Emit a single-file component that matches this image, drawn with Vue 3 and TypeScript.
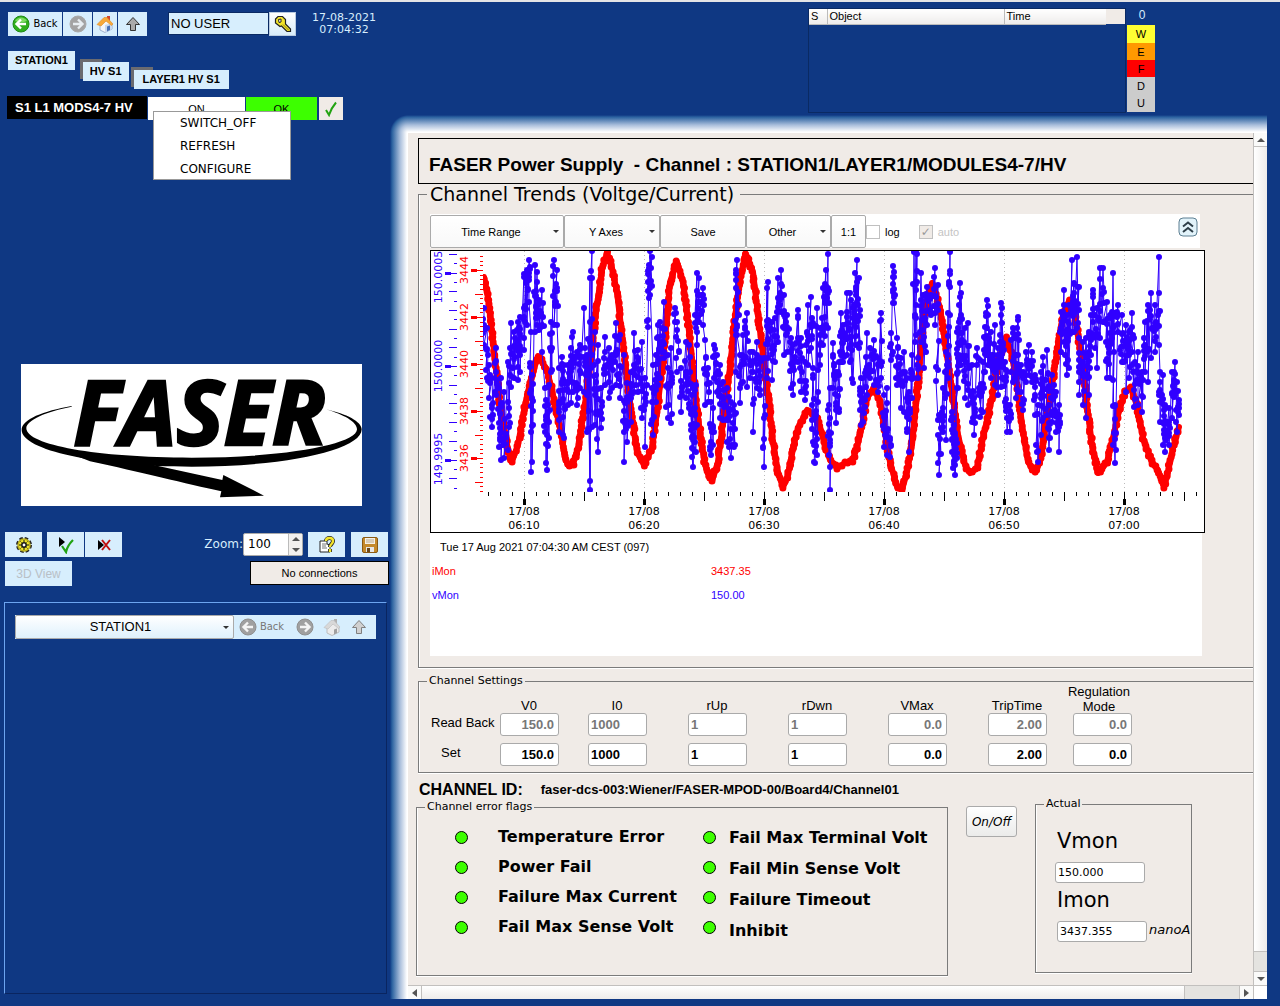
<script setup lang="ts">
import { ref } from 'vue'

const crumbs = ['STATION1', 'HV S1', 'LAYER1 HV S1']
const commands = ['SWITCH_OFF', 'REFRESH', 'CONFIGURE']
const alarmLevels = [
  { key: 'W', tone: 'warning' },
  { key: 'E', tone: 'error' },
  { key: 'F', tone: 'fatal' },
  { key: 'D', tone: 'idle' },
  { key: 'U', tone: 'idle' },
]
const settings = [
  { name: 'V0', read: '150.0', set: '150.0', numeric: true },
  { name: 'I0', read: '1000', set: '1000', numeric: false },
  { name: 'rUp', read: '1', set: '1', numeric: false },
  { name: 'rDwn', read: '1', set: '1', numeric: false },
  { name: 'VMax', read: '0.0', set: '0.0', numeric: true },
  { name: 'TripTime', read: '2.00', set: '2.00', numeric: true },
  { name: 'Regulation Mode', read: '0.0', set: '0.0', numeric: true },
]
const setValues = ref(settings.map((s) => s.set))
const flagsLeft = ['Temperature Error', 'Power Fail', 'Failure Max Current', 'Fail Max Sense Volt']
const flagsRight = ['Fail Max Terminal Volt', 'Fail Min Sense Volt', 'Failure Timeout', 'Inhibit']
const zoomLevel = ref(100)
const userName = ref('NO USER')
const station = ref('STATION1')

type Point = [number, number]

// Current trend: turning points of the curve, x then y.
const currentKeys: Point[] = [
  [484, 277], [488, 298], [493, 342], [500, 405], [507, 445], [512, 461], [518, 445], [525, 405], [532, 375], [538, 356],
  [547, 370], [553, 395], [562, 438], [565, 458], [568, 465], [573, 464], [578, 448], [585, 405], [592, 345], [597, 305],
  [602, 270], [607, 253], [612, 268], [617, 292], [622, 335], [627, 378], [632, 418], [637, 452], [644, 465], [652, 448],
  [657, 412], [662, 368], [667, 318], [670, 282], [677, 262], [683, 282], [688, 322], [693, 370], [698, 418], [705, 465],
  [712, 481], [718, 462], [723, 422], [730, 368], [735, 318], [740, 278], [746, 254], [753, 272], [758, 315], [763, 355],
  [768, 395], [773, 442], [778, 472], [783, 487], [788, 475], [793, 448], [798, 428], [807, 410], [817, 418], [823, 438],
  [830, 460], [837, 468], [845, 463], [852, 461], [857, 448], [862, 425], [867, 398], [873, 389], [880, 400], [885, 432],
  [890, 462], [897, 487], [902, 490], [907, 472], [912, 445], [917, 395], [921, 348], [925, 312], [932, 283], [940, 308],
  [945, 342], [952, 390], [958, 435], [965, 465], [970, 473], [977, 468], [983, 438], [992, 398], [998, 362], [1006, 338],
  [1012, 355], [1018, 392], [1023, 432], [1028, 462], [1035, 472], [1040, 462], [1045, 428], [1052, 385], [1058, 345],
  [1063, 315], [1069, 301], [1075, 315], [1080, 348], [1087, 405], [1092, 445], [1098, 473], [1107, 462], [1113, 438],
  [1118, 415], [1125, 392], [1131, 388], [1137, 405], [1143, 438], [1152, 463], [1158, 470], [1164, 487], [1168, 472],
  [1173, 448], [1179, 427],
]

// Voltage trend: bursts as x, highest, lowest, in thirds of a plot unit from each origin.
const voltageBursts: { x0: number; y0: number; rows: string }[] = [
  {
    x0: 425,
    y0: 245,
    rows:
      '178 190 300,186 250 400,192 360 460,200 400 545,213 310 450,222 430 605,228 400 645,238 440 640,250 350 615,257 235 425,268 260 400,278 230 405,285 215 380,297 88 315,305 75 240,313 45 170,318 260 680,322 390 650,330 60 260,335 80 240,343 165 255,352 135 320,360 430 560,366 480 675,372 420 580,378 230 380,388 45 240,395 75 240,402 370 560,412 335 470,418 360 580,428 360 480,437 310 475,445 260 440,455 320 480,465 300 430,478 190 440,487 330 560,494 100 735,500 18 545,510 260 540,518 300 620,528 430 550,540 275 420,553 310 460,562 330 430,573 235 420,585 270 460,597 330 650,607 415 590,618 380 530,628 265 440,638 315 440,650 290 520,661 400 605,668 225 245,672 60 160,676 18 130,683 360 570,692 330 470,700 240 420,706 230 400,716 170 340,728 330 520,738 310 535,751 190 230,757 230 380,768 370 500,783 290 460,793 300 490,803 430 665',
  },
  {
    x0: 690,
    y0: 245,
    rows:
      '5 450 610,10 500 665,17 420 620,20 85 300,28 100 230,38 130 240,45 285 480,55 370 470,62 470 630,68 490 600,73 300 400,82 330 440,90 360 520,100 410 525,112 430 590,122 470 640,133 480 605,137 75 380,142 45 270,150 330 475,158 270 410,170 205 425,180 320 400,190 320 560,200 290 430,210 340 450,222 340 665,230 130 400,235 110 340,245 230 405,255 220 350,265 100 290,273 75 200,282 150 330,292 210 320,302 280 430,310 300 450,323 195 350,333 280 440,344 350 465,353 180 360,364 155 310,368 370 590,376 520 655,382 190 630,390 250 360,400 130 300,407 75 240,413 28 250,416 480 630,421 430 735,430 295 430,437 380 535,447 350 500,452 205 350,460 240 350,470 145 330,480 145 350,488 190 415,497 150 300,500 45 170,507 100 310,512 400 540,520 400 530,530 265 450,540 310 400,553 285 420,565 340 440,574 205 400,583 450 605,592 430 630,600 580 635,604 265 345,608 62 175,613 95 175,622 280 420,632 340 490,643 320 500,652 400 560,658 440 620,665 330 460,673 20 400,678 20 180,684 340 400,694 85 290,703 150 370,712 125 240,722 150 210,735 70 240,743 120 525,748 510 690,758 430 560,768 320 585,774 205 400,779 20 210,787 500 620,796 570 690,803 250 430',
  },
  {
    x0: 950,
    y0: 205,
    rows:
      '10 640 790,16 690 810,22 380 550,30 235 420,34 265 480,45 370 580,55 355 600,65 480 650,73 580 690,80 430 480,90 465 635,98 470 620,104 365 500,110 285 370,115 330 480,123 380 520,135 360 540,145 430 570,153 295 545,157 310 520,165 470 590,172 500 680,180 600 680,188 370 530,198 400 580,204 335 560,213 480 560,220 500 615,228 440 530,236 420 510,245 440 530,255 510 630,263 600 770,272 500 690,280 455 640,292 435 630,298 600 735,307 510 650,317 560 680,328 600 740,333 320 440,341 255 410,350 330 510,357 300 490,367 165 380,373 265 380,382 155 370,388 400 570,398 410 600,409 400 640,416 380 570,422 330 450,430 255 400,440 310 490,451 190 400,460 190 350,470 290 520,480 330 520,487 320 400,490 205 720,495 600 775,505 300 380,515 330 470,527 360 560,537 380 520,545 325 440,553 400 605,563 440 600,575 500 620,585 350 500,593 300 530,603 265 460,615 300 440,626 155 420,630 500 650,638 510 720,645 600 740,658 610 720,667 500 640,674 470 570,681 530 680,686 585 630',
  },
]

let seed = 7
function random(): number {
  seed = (seed * 16807) % 2147483647
  return seed / 2147483647
}

function sampleCurrent(): Point[] {
  const out: Point[] = []
  for (let i = 0; i < currentKeys.length - 1; i++) {
    const [ax, ay] = currentKeys[i]
    const [bx, by] = currentKeys[i + 1]
    const steps = Math.max(3, Math.round(Math.hypot(bx - ax, by - ay) / 3))
    for (let s = 0; s < steps; s++) {
      const t = s / steps
      out.push([ax + (bx - ax) * t + (random() - 0.5) * 2, Math.round(ay + (by - ay) * t + (random() - 0.5) * 3)])
    }
  }
  return out
}

function sampleVoltage(): Point[] {
  const out: Point[] = []
  for (const { x0, y0, rows } of voltageBursts) {
    for (const row of rows.split(',')) {
      const [cx, hi, lo] = row.split(' ').map(Number)
      const x = x0 + cx / 3
      const top = y0 + hi / 3
      const bottom = y0 + lo / 3
      const count = Math.max(1, Math.min(6, Math.round((bottom - top) / 7)))
      out.push([x, top])
      for (let i = 0; i < count; i++) {
        // Averaging two draws gathers the readings around the middle of a burst.
        const t = (random() + random()) / 2
        out.push([x + (random() - 0.5) * 3, top + (bottom - top) * t])
      }
      out.push([x, bottom])
    }
  }
  return out.map(([x, y]) => [Math.round(x), Math.round(y)] as Point)
}

const toLine = (points: Point[]) => 'M' + points.map(([x, y]) => `${x.toFixed(1)} ${y}`).join('L')
const toDots = (points: Point[]) => points.map(([x, y]) => `M${x.toFixed(1)} ${y}h0`).join('')

const current = sampleCurrent()
const voltage = sampleVoltage()
const currentLine = toLine(currentKeys)
const currentDots = toDots(current)
const voltageLine = toLine(voltage)
const voltageDots = toDots(voltage)

const timeLabels = ['06:10', '06:20', '06:30', '06:40', '06:50', '07:00'].map((time, i) => ({ time, x: 524 + i * 120 }))
const timeTicks = Array.from({ length: 60 }, (_, i) => {
  const x = 488 + i * 12
  return { x, end: (x - 524) % 120 === 0 ? 505 : (x - 524) % 60 === 0 ? 501 : 496 }
})
const voltLabels = [
  { text: '150.0005', y: 277 },
  { text: '150.0000', y: 366 },
  { text: '149.9995', y: 459 },
]
const voltTicks = Array.from({ length: 26 }, (_, i) => {
  const step = i - 2
  return { y: Math.round(272.5 + step * 9.35), start: step % 10 === 0 ? 446 : step % 2 === 0 ? 449 : 454, major: step % 10 === 0 }
})
const ampLabels = [3444, 3442, 3440, 3438, 3436].map((text, i) => ({ text, y: 270 + i * 47 }))
const ampTicks = Array.from({ length: 51 }, (_, i) => {
  const step = i - 3
  return { y: Math.round(270 + step * 4.7), start: step % 10 === 0 ? 471 : step % 5 === 0 ? 475 : 480, major: step % 10 === 0 }
})
</script>

<template>
  <div class="console">
    <aside class="side">
      <div class="topbar">
        <nav class="nav" aria-label="History">
          <button type="button" class="tool back">
            <svg width="18" height="18" viewBox="0 0 18 18">
              <circle cx="9" cy="9" r="8" fill="#2fae1d" stroke="#1d8b14" />
              <path d="M3 6a7 7 0 0 1 12 0a12 9 0 0 1-12 0z" fill="#7ddc62" />
              <path d="M14 9H5M9 4.500L4.500 9L9 13.500" fill="none" stroke="#fff" stroke-width="2.400" />
            </svg>
            Back
          </button>
          <button type="button" class="tool forward" aria-label="Forward">
            <svg width="18" height="18" viewBox="0 0 18 18">
              <circle cx="9" cy="9" r="8" fill="#a3a3a3" stroke="#a9a9a9" />
              <path d="M4 9H13M9 4.500L13.500 9L9 13.500" fill="none" stroke="#e8eef2" stroke-width="2.400" />
            </svg>
          </button>
          <button type="button" class="tool home" aria-label="Home">
            <svg width="18" height="18" viewBox="0 0 18 18">
              <path d="M4 9L11 5L16 9V14L9 17.500L4 15z" fill="#f4f6fa" stroke="#9fb0cc" />
              <path d="M9 10L16 8V14L9 17.500z" fill="#c9d8ee" />
              <path d="M11 1h3v5h-3z" fill="#d2452e" />
              <path d="M1 9.500L8 2.500L11 2.500L17 9L15.500 10.500L10 6L5 11z" fill="#f7a93a" stroke="#e08a24" stroke-width=".6" />
              <path d="M11 11.500l3-1v4.500l-3 1.500z" fill="#4a72b8" />
            </svg>
          </button>
          <button type="button" class="tool up" aria-label="Up">
            <svg width="16" height="16" viewBox="0 0 16 16">
              <path d="M8 1.500L14.500 8.500H10.500V14.500H5.500V8.500H1.500z" fill="#a9a9a9" stroke="#333" />
            </svg>
          </button>
        </nav>
        <div class="user">
          <input v-model="userName" aria-label="User" />
          <button type="button" aria-label="Log in">
            <svg width="18" height="18" viewBox="0 0 18 18">
              <path d="M4 1.500H8.500L11.500 4.500V9L16.500 14V16.500H13L7.500 11L6 11.500L1.500 8V4z" fill="#f2e32a" stroke="#222" stroke-width="1.200" />
              <path d="M4.500 4.500L7 4V7L5 7.500z" fill="#fff" stroke="#222" />
              <path d="M9 9.500L15 15.500" stroke="#8a8010" />
            </svg>
          </button>
        </div>
        <time class="clock">17-08-2021<br />07:04:32</time>
      </div>

      <nav class="crumbs" aria-label="Position">
        <a v-for="crumb in crumbs" :key="crumb" href="#">{{ crumb }}</a>
      </nav>

      <div class="unit">
        <strong>S1 L1 MODS4-7 HV</strong>
        <button type="button" class="state">ON</button>
        <button type="button" class="status">OK</button>
        <button type="button" class="ack" aria-label="Enabled">
          <svg width="14" height="16" viewBox="0 0 14 16">
            <path d="M2 9L5 14C7 8 9 5 12 1.500" fill="none" stroke="#22a312" stroke-width="2" />
          </svg>
        </button>
        <ul class="menu" role="menu">
          <li v-for="command in commands" :key="command" role="none">
            <button type="button" role="menuitem">{{ command }}</button>
          </li>
        </ul>
      </div>

      <div class="logo">
        <svg viewBox="63 42 1023 426" role="img" aria-label="FASER">
          <text x="220" y="284">FASER</text>
          <path
            d="M215 168C130 183 65 208 65 240C65 300 290 350 575 350C860 350 1085 300 1085 238C1085 215 1040 192 978 178C1030 194 1071 215 1071 238C1071 282 860 323 575 323C290 323 79 285 79 235C79 210 140 184 215 170z"
          />
          <path d="M230 318L430 338L667 390L670 375L792 437L660 442L664 424C560 402 420 366 270 334z" />
        </svg>
      </div>

      <div class="tools">
        <button type="button" class="tool icon" aria-label="Settings">
          <svg width="18" height="18" viewBox="0 0 18 18">
            <circle cx="9" cy="9" r="6" fill="#e8dd2a" stroke="#222" stroke-width="4" stroke-dasharray="3 1.700" />
            <circle cx="9" cy="9" r="6" fill="#f0e62c" stroke="#b9ae1c" stroke-width="1.500" />
            <circle cx="9" cy="9" r="2.200" fill="#fff" stroke="#111" stroke-width="1.500" />
            <path d="M4 9h2M12 9h2M9 4v2M9 12v2M5.500 5.500l1 1M11.500 11.500l1 1M12.500 5.500l-1 1M6.500 11.500l-1 1" stroke="#111" />
          </svg>
        </button>
        <button type="button" class="tool icon" aria-label="Include">
          <svg width="18" height="18" viewBox="0 0 18 18">
            <path d="M2 1L8 6L2 11z" />
            <path d="M5 10L9 16C10 11 12 8 16 4" fill="none" stroke="#22a312" stroke-width="2.200" />
          </svg>
        </button>
        <button type="button" class="tool icon" aria-label="Exclude">
          <svg width="18" height="18" viewBox="0 0 18 18">
            <path d="M3 4L9 9L3 14z" />
            <path d="M7 4L15 14M15 4L7 14" stroke="#c01010" stroke-width="2" />
          </svg>
        </button>
        <label class="zoom" for="zoom">Zoom:</label>
        <div class="spin">
          <input id="zoom" v-model="zoomLevel" type="number" />
          <div class="steps">
            <button type="button" aria-label="Zoom in" @click="zoomLevel++"><i class="tri up"></i></button>
            <button type="button" aria-label="Zoom out" @click="zoomLevel--"><i class="tri down"></i></button>
          </div>
        </div>
        <button type="button" class="tool icon" aria-label="Help">
          <svg width="18" height="18" viewBox="0 0 18 18">
            <path d="M2 5H9V8L12 9V16H2z" fill="#fff" stroke="#222" />
            <path d="M4 8h5M4 10h4M4 12h5" stroke="#777" />
            <path d="M8 5C8 1 15 1 15 5C15 8 12 8 12 11M12 13v3" fill="none" stroke="#222" stroke-width="4" />
            <path d="M8 5C8 1 15 1 15 5C15 8 12 8 12 11M12 13v3" fill="none" stroke="#f4e52c" stroke-width="2.400" />
          </svg>
        </button>
        <button type="button" class="tool icon" aria-label="Save">
          <svg width="18" height="18" viewBox="0 0 18 18">
            <rect x="1.500" y="1.500" width="15" height="15" rx="1.500" fill="#c48a2c" stroke="#8a5a14" />
            <path d="M4 2h10v6H4z" fill="#f6f1e6" />
            <path d="M5 4h8M5 6h8" stroke="#b9a98c" />
            <path d="M5 11h8v5H5z" fill="#e6e6e6" />
            <path d="M6 12h3v4H6z" fill="#6b4a1a" />
          </svg>
        </button>
      </div>
      <div class="tools second">
        <button type="button" class="tool view" disabled>3D View</button>
        <output class="links">No connections</output>
      </div>

      <section class="browser" aria-label="Browser">
        <div class="browserbar">
          <div class="combo">
            <select v-model="station" aria-label="Station">
              <option>STATION1</option>
            </select>
            <i class="tri down small"></i>
          </div>
          <button type="button" class="tool" disabled>
            <svg width="18" height="18" viewBox="0 0 18 18">
              <circle cx="9" cy="9" r="8" fill="#a0a0a0" stroke="#8f8f8f" />
              <path d="M14 9H5M9 4.500L4.500 9L9 13.500" fill="none" stroke="#f4f4f4" stroke-width="2.400" />
            </svg>
            Back
          </button>
          <button type="button" class="tool next" aria-label="Forward" disabled>
            <svg width="18" height="18" viewBox="0 0 18 18">
              <circle cx="9" cy="9" r="8" fill="#a0a0a0" stroke="#8f8f8f" />
              <path d="M4 9H13M9 4.500L13.500 9L9 13.500" fill="none" stroke="#f4f4f4" stroke-width="2.400" />
            </svg>
          </button>
          <button type="button" class="tool" aria-label="Home" disabled>
            <svg width="18" height="18" viewBox="0 0 18 18">
              <path d="M4 9L11 5L16 9V14L9 17.500L4 15z" fill="#ececec" stroke="#bdbdbd" />
              <path d="M11 1h3v5h-3z" fill="#b0b0b0" />
              <path d="M1 9.500L8 2.500L11 2.500L17 9L15.500 10.500L10 6L5 11z" fill="#d8d8d8" stroke="#bcbcbc" stroke-width=".6" />
              <path d="M11 11.500l3-1v4.500l-3 1.500z" fill="#a0a0a0" />
            </svg>
          </button>
          <button type="button" class="tool" aria-label="Up" disabled>
            <svg width="16" height="16" viewBox="0 0 16 16">
              <path d="M8 1.500L14.500 8.500H10.500V14.500H5.500V8.500H1.500z" fill="#d0d0d0" stroke="#808080" />
            </svg>
          </button>
        </div>
      </section>
    </aside>

    <main class="main">
      <header class="alarms">
        <div class="alarmlist">
          <table>
            <thead>
              <tr>
                <th class="severity">S</th>
                <th class="object">Object</th>
                <th class="when">Time</th>
                <td></td>
              </tr>
            </thead>
          </table>
        </div>
        <div class="levels">
          <span class="count">0</span>
          <button v-for="level in alarmLevels" :key="level.key" type="button" :class="level.tone">{{ level.key }}</button>
        </div>
      </header>

      <div class="frame">
        <div class="viewport">
          <h1>FASER Power Supply&nbsp; - Channel : STATION1/LAYER1/MODULES4-7/HV</h1>

          <fieldset class="trends">
            <legend>Channel Trends (Voltge/Current)</legend>
            <div class="trendbar">
              <button type="button" class="wide">Time Range<i class="tri down small"></i></button>
              <button type="button" class="axes">Y Axes<i class="tri down small"></i></button>
              <button type="button" class="save">Save</button>
              <button type="button" class="other">Other<i class="tri down small"></i></button>
              <button type="button" class="unitscale">1:1</button>
              <label><input type="checkbox" />log</label>
              <label class="off"><input type="checkbox" checked disabled />auto</label>
              <button type="button" class="collapse" aria-label="Collapse">
                <svg width="20" height="20" viewBox="0 0 20 20">
                  <rect x="1" y="1" width="18" height="18" rx="4" fill="#e2f3fa" stroke="#5c7f92" />
                  <path d="M5 9.500L10 5.500L15 9.500M5 15L10 11L15 15" fill="none" stroke="#2d3e48" stroke-width="2" />
                </svg>
              </button>
            </div>
            <svg class="chart" width="775" height="283" viewBox="430 250 775 283" role="img" aria-label="Voltage and current trend">
              <defs>
                <clipPath id="plot-area"><rect x="483" y="251" width="721" height="241" /></clipPath>
              </defs>
              <rect x="430.5" y="250.5" width="774" height="282" fill="#fff" stroke="#000" />
              <path v-for="label in timeLabels" :key="label.x" :d="`M${label.x + 0.5} 251V492`" class="gridline" />
              <g clip-path="url(#plot-area)">
                <path :d="currentLine" class="current-line" />
                <path :d="currentDots" class="current-dots" />
                <path :d="voltageLine" class="voltage-line" />
                <path :d="voltageDots" class="voltage-dots" />
              </g>
              <g class="crisp">
                <template v-for="tick in timeTicks" :key="tick.x">
                  <rect :x="tick.x" y="492" width="1" :height="tick.end - 492" />
                  <rect v-if="tick.end === 505" :x="tick.x - 1" y="499" width="3" height="6" />
                </template>
                <g fill="#3000ff">
                  <template v-for="tick in voltTicks" :key="tick.y">
                    <rect :x="tick.start" :y="tick.y" :width="457 - tick.start" height="1" />
                    <rect v-if="tick.major" x="445" :y="tick.y - 1" width="6" height="3" />
                  </template>
                </g>
                <g fill="#f00">
                  <template v-for="tick in ampTicks" :key="tick.y">
                    <rect :x="tick.start" :y="tick.y" :width="483 - tick.start" height="1" />
                    <rect v-if="tick.major" x="471" :y="tick.y - 1" width="6" height="3" />
                  </template>
                </g>
              </g>
              <text v-for="label in voltLabels" :key="label.text" :transform="`translate(442 ${label.y}) rotate(-90)`" fill="#3000ff">
                {{ label.text }}
              </text>
              <text v-for="label in ampLabels" :key="label.text" :transform="`translate(468 ${label.y}) rotate(-90)`" fill="#f00">
                {{ label.text }}
              </text>
              <template v-for="label in timeLabels" :key="label.time">
                <text :x="label.x" y="515">17/08</text>
                <text :x="label.x" y="529">{{ label.time }}</text>
              </template>
            </svg>
            <div class="readout">
              <p>Tue 17 Aug 2021 07:04:30 AM CEST (097)</p>
              <dl>
                <div class="imon"><dt>iMon</dt><dd>3437.35</dd></div>
                <div class="vmon"><dt>vMon</dt><dd>150.00</dd></div>
              </dl>
            </div>
          </fieldset>

          <fieldset class="settings">
            <legend>Channel Settings</legend>
            <div class="matrix">
              <span></span>
              <span v-for="s in settings" :key="s.name" class="colhead">{{ s.name }}</span>
              <span class="rowhead">Read Back</span>
              <input
                v-for="s in settings"
                :key="s.name + '-read'"
                :value="s.read"
                :class="{ numeric: s.numeric }"
                :aria-label="s.name + ' read back'"
                disabled
              />
              <span class="rowhead set">Set</span>
              <input
                v-for="(s, i) in settings"
                :key="s.name + '-set'"
                v-model="setValues[i]"
                :class="{ numeric: s.numeric }"
                :aria-label="s.name + ' set'"
              />
            </div>
          </fieldset>

          <p class="channel"><b>CHANNEL ID:</b><strong>faser-dcs-003:Wiener/FASER-MPOD-00/Board4/Channel01</strong></p>

          <div class="bottom">
            <fieldset class="flags">
              <legend>Channel error flags</legend>
              <ul class="leds"><li v-for="flag in flagsLeft" :key="flag"></li></ul>
              <ul class="names first"><li v-for="flag in flagsLeft" :key="flag">{{ flag }}</li></ul>
              <ul class="leds"><li v-for="flag in flagsRight" :key="flag"></li></ul>
              <ul class="names tall"><li v-for="flag in flagsRight" :key="flag">{{ flag }}</li></ul>
            </fieldset>
            <button type="button" class="onoff">On/Off</button>
            <fieldset class="actual">
              <legend>Actual</legend>
              <label for="vmon">Vmon</label>
              <input id="vmon" value="150.000" readonly />
              <label for="imon">Imon</label>
              <div class="withunit"><input id="imon" value="3437.355" readonly /><em>nanoA</em></div>
            </fieldset>
          </div>
        </div>

        <div class="scroll vertical">
          <button type="button" aria-label="Scroll up"><i class="tri up"></i></button>
          <div class="thumb"></div>
          <div class="track"></div>
          <button type="button" aria-label="Scroll down"><i class="tri down"></i></button>
        </div>
        <div class="scroll horizontal">
          <button type="button" aria-label="Scroll left"><i class="tri left"></i></button>
          <div class="thumb"></div>
          <div class="track"></div>
          <button type="button" aria-label="Scroll right"><i class="tri right"></i></button>
        </div>
        <div class="corner"></div>
      </div>
    </main>
  </div>
</template>

<style>
body {
  background: #0f3883;
}
</style>

<style scoped>
.console,
.console * {
  box-sizing: border-box;
}
.console {
  display: grid;
  grid-template-columns: 390px 1fr;
  min-height: 100vh;
  border-top: 2px solid #e4e4e6;
  background: #0f3883;
  color: #000;
  font: 11px/14px 'Liberation Sans', Arial, sans-serif;
}
button,
input,
select {
  margin: 0;
  padding: 0;
  border: 0;
  border-radius: 0;
  font: inherit;
  color: inherit;
}
ul,
dl,
dd,
p,
h1 {
  margin: 0;
  padding: 0;
  list-style: none;
}
svg {
  display: block;
  flex: none;
}
.tool {
  display: flex;
  align-items: center;
  justify-content: center;
  gap: 3px;
  background: #d7eefd;
  font-family: 'DejaVu Sans Condensed', 'DejaVu Sans', sans-serif;
}
.tri {
  display: block;
  width: 0;
  height: 0;
  border: 4px solid transparent;
}
.tri.up {
  border-top: 0;
  border-bottom-color: #555;
}
.tri.down {
  border-bottom: 0;
  border-top-color: #555;
}
.tri.left {
  border-left: 0;
  border-right: 5px solid #555;
}
.tri.right {
  border-right: 0;
  border-left: 5px solid #555;
}
.tri.small {
  border-width: 3px;
  border-bottom: 0;
  border-top-color: #333;
}

/* Left column */
.side {
  display: flex;
  flex-direction: column;
  padding: 10px 3px 12px 4px;
}
.topbar {
  display: flex;
  padding-left: 4px;
}
.nav {
  display: flex;
  gap: 1px;
  height: 24px;
}
.back {
  width: 54px;
}
.forward,
.up.tool {
  width: 29px;
}
.home {
  width: 24px;
}
.user {
  display: flex;
  height: 24px;
  margin-left: 21px;
}
.user input {
  width: 101px;
  height: 23px;
  padding: 0 2px 1px;
  border: 1px solid #0a2a63;
  background: #d7eefd;
  font-size: 13px;
  line-height: 16px;
}
.user button {
  display: flex;
  align-items: center;
  justify-content: center;
  width: 27px;
  border: 1px solid #b9cbe0;
  background: linear-gradient(#fff, #d8ecfa);
}
.clock {
  margin-left: 16px;
  color: #d7eefd;
  font: 11px/12px 'DejaVu Sans', sans-serif;
  text-align: center;
}
.crumbs {
  display: flex;
  align-items: flex-start;
  margin: 15px 0 0 4px;
  font-weight: bold;
}
.crumbs a {
  position: relative;
  padding: 0 7px;
  background: #d7eefd;
  color: #000;
  line-height: 19px;
  text-decoration: none;
}
.crumbs a + a {
  margin: 11px 0 0 8px;
}
.crumbs a + a + a {
  margin: 19px 0 0 5px;
  padding: 0 9px;
}
.crumbs a + a::before {
  content: '';
  position: absolute;
  left: -3px;
  top: -3px;
  width: 19px;
  height: 17px;
  border: solid #6b6b70;
  border-width: 3px 0 0 3px;
}
.unit {
  position: relative;
  display: flex;
  gap: 1px;
  height: 24px;
  margin: 7px 0 0 3px;
}
.unit strong {
  width: 140px;
  height: 23px;
  padding-left: 8px;
  background: #000;
  color: #fff;
  font-size: 13px;
  line-height: 23px;
}
.unit button {
  margin-top: 1px;
}
.state {
  width: 97px;
  background: #fff;
}
.status {
  width: 71px;
  background: #3dff00;
}
.ack {
  display: flex;
  align-items: center;
  justify-content: center;
  width: 24px;
  background: #f0ebe7;
}
.unit .ack {
  margin-left: 1px;
}
.menu {
  position: absolute;
  z-index: 1;
  top: 15px;
  left: 146px;
  width: 138px;
  border: 1px solid #999;
  background: #fff;
}
.menu button {
  display: block;
  width: 100%;
  height: 23px;
  margin: 0;
  padding: 0 0 2px 26px;
  background: none;
  font: 12px/20px 'DejaVu Sans', sans-serif;
  text-align: left;
}
.menu li:last-child button {
  height: 21px;
  padding-bottom: 0;
}
.logo {
  width: 341px;
  margin: 244px 0 0 17px;
  background: #fff;
}
.logo svg {
  overflow: visible;
}
.logo text {
  font: italic bold 267px 'Liberation Sans Narrow', 'Open Sans', sans-serif;
  stroke: #000;
  stroke-width: 8px;
}
.tools {
  display: flex;
  gap: 1px;
  height: 25px;
  margin: 26px -1px 0 1px;
}
.tool.icon {
  width: 37px;
}
.tools .icon:first-child {
  margin-right: 4px;
}
.zoom {
  margin: 0 -1px 0 auto;
  color: #d7eefd;
  font: 12px/24px 'DejaVu Sans', sans-serif;
}
.spin {
  display: flex;
  align-self: center;
  width: 60px;
  height: 23px;
  margin-right: 4px;
  border: 1px solid #aaa;
  border-radius: 2px;
  background: #fff;
}
.spin input {
  flex: 1;
  min-width: 0;
  padding-left: 4px;
  appearance: textfield;
  background: none;
  font: 12px/21px 'DejaVu Sans', sans-serif;
}
.spin input::-webkit-inner-spin-button {
  display: none;
}
.steps {
  display: grid;
  width: 14px;
  border-left: 1px solid #bbb;
  background: #f3f1ef;
}
.steps button {
  display: grid;
  place-items: center;
  background: none;
}
.tools .icon:last-child {
  margin-left: 5px;
}
.tools.second {
  justify-content: space-between;
  margin-top: 4px;
}
.tool.view {
  width: 67px;
  color: #b9c0c6;
  font: 12px 'Liberation Sans', Arial, sans-serif;
}
.links {
  width: 139px;
  height: 24px;
  margin-right: -1px;
  border: 1px solid #000;
  background: #f0ebe7;
  line-height: 22px;
  text-align: center;
}
.browser {
  flex: 1;
  margin-top: 16px;
  padding: 12px 10px;
  border: 1px solid;
  border-color: #6da5f0 #0a2560 #0a2560 #6da5f0;
}
.browserbar {
  display: flex;
  align-items: center;
  height: 24px;
  background: #d7eefd;
}
.browserbar .tool {
  height: 24px;
  padding: 0 5px;
  color: #777;
}
.browserbar .tool.next {
  padding: 0 4px 0 7px;
}
.combo {
  display: grid;
  align-items: center;
  width: 219px;
  height: 24px;
}
.combo > * {
  grid-area: 1 / 1;
}
.combo select {
  width: 100%;
  height: 24px;
  padding-right: 8px;
  appearance: none;
  border: 1px solid #aaa;
  border-radius: 2px;
  background: linear-gradient(#fff, #dff1fc);
  font-size: 13px;
  text-align: center;
  text-align-last: center;
}
.combo .tri {
  justify-self: end;
  margin-right: 5px;
}

/* Right column */
.main {
  display: flex;
  flex-direction: column;
  min-width: 0;
  padding: 6px 13px 7px 0;
}
.alarms {
  display: flex;
  justify-content: flex-end;
  gap: 1px;
  height: 107px;
  padding-right: 112px;
}
.alarmlist {
  width: 318px;
  height: 105px;
  border: 1px solid #0a2a63;
}
.alarmlist table {
  width: 100%;
  border-collapse: collapse;
  table-layout: fixed;
}
.alarmlist th,
.alarmlist td {
  height: 15px;
  padding: 0 2px;
  background: #f0ebe7;
}
.alarmlist th {
  border: solid #bbb;
  border-width: 0 1px 1px 0;
  background: linear-gradient(#fff, #eeeceb);
  font-weight: normal;
  text-align: left;
}
.alarmlist .when {
  border-right: 0;
}
.severity {
  width: 18px;
}
.object {
  width: 177px;
}
.when {
  width: 102px;
}
.levels {
  display: grid;
  grid-template-rows: 17px 18px 17px 17px 17px 18px;
  width: 28px;
  align-content: start;
  text-align: center;
}
.count {
  padding-left: 2px;
  color: #d7eefd;
  font-size: 12px;
}
.warning {
  background: #ff3;
}
.error {
  background: #f90;
}
.fatal {
  background: #f00;
}
.idle {
  background: #ccc;
}
.frame {
  display: grid;
  flex: 1;
  grid-template: 1fr 14px / minmax(0, 1fr) 14px;
  padding: 18px 0 0 18px;
  background:
    radial-gradient(circle at 18px 18px, #fff 0, #fff 1px, #a9bedb 8px, #2a619f 16px, #0f3883 18px) 0 0 / 18px 18px no-repeat,
    linear-gradient(#0f3883, #2a619f 2px, #a9bedb 10px, #fff 17px) 18px 0 / 100% 18px no-repeat,
    linear-gradient(to right, #0f3883, #2a619f 2px, #a9bedb 10px, #fff 17px) 0 18px / 18px 100% no-repeat;
}
.viewport {
  overflow: hidden;
  padding: 5px 0 7px 10px;
  background: #f0ebe7;
}
h1 {
  height: 46px;
  padding: 0 10px;
  border: solid #000;
  border-width: 1px 0 1px 1px;
  font-size: 19px;
  line-height: 51px;
  white-space: nowrap;
}
fieldset {
  min-width: 0;
  margin: 0;
  padding: 0;
  border: 1px solid #7b7b7b;
  box-shadow: inset 1px 0 #fff, 0 1px #fff;
}
legend {
  margin-left: 8px;
  padding: 0 2px;
  font: 11px/14px 'DejaVu Sans', sans-serif;
}
.trends,
.settings {
  border-right: 0;
}
.trends {
  padding: 10px 0 11px 11px;
}
.trends legend {
  margin-left: -3px;
  padding: 0 6px 0 3px;
  font-size: 19px;
  line-height: 20px;
}
.trendbar {
  display: flex;
  max-width: 770px;
  height: 34px;
  padding-top: 1px;
  background: #fff;
}
.trendbar > button {
  position: relative;
  border: 1px solid #aaa;
  border-radius: 2px;
  background: linear-gradient(#fff, #f8f8f8);
}
.trendbar .tri {
  position: absolute;
  top: 14px;
  right: 4px;
}
.trendbar .wide {
  width: 134px;
  padding-right: 12px;
}
.trendbar .axes {
  width: 96px;
  padding-right: 12px;
}
.trendbar .save {
  width: 86px;
}
.trendbar .other {
  width: 85px;
  padding-right: 12px;
}
.trendbar .unitscale {
  width: 35px;
}
.trendbar label {
  display: flex;
  align-items: center;
  gap: 5px;
  margin-right: 19px;
}
.trendbar .off {
  color: #c4c4c4;
}
.trendbar input {
  width: 14px;
  height: 14px;
  appearance: none;
  border: 1px solid #c0c0c0;
  background: #fff;
}
.trendbar input:checked {
  background: #f0ebe7;
  line-height: 12px;
  text-align: center;
}
.trendbar input:checked::before {
  content: '✓';
  color: #999;
  font: bold 12px/12px 'DejaVu Sans', sans-serif;
}
.trendbar .collapse {
  width: 20px;
  height: 20px;
  margin: 2px 2px 0 auto;
  border: 0;
  background: none;
}
.chart {
  margin-top: 2px;
}
.chart text {
  font: 11px 'DejaVu Sans', sans-serif;
  text-anchor: middle;
}
.gridline {
  stroke: #bbb;
  stroke-dasharray: 1 3;
}
.current-line,
.current-dots,
.voltage-line,
.voltage-dots {
  fill: none;
  stroke-linecap: round;
  stroke-linejoin: round;
}
.current-line {
  stroke: #f00;
  stroke-width: 6px;
}
.current-dots {
  stroke: #f00;
  stroke-width: 7px;
}
.voltage-line {
  stroke: #3000ff;
  stroke-width: 1px;
}
.voltage-dots {
  stroke: #3000ff;
  stroke-width: 6px;
}
.crisp {
  shape-rendering: crispEdges;
}
.readout {
  max-width: 772px;
  height: 123px;
  padding: 7px 2px;
  background: #fff;
}
.readout p {
  padding-left: 8px;
}
.readout dl > div {
  display: grid;
  grid-template-columns: 279px 1fr;
  margin-top: 10px;
}
.imon {
  color: #f00;
}
.vmon {
  color: #3000ff;
}
.settings {
  margin-top: 6px;
  padding: 0 0 6px 12px;
}
.settings legend {
  margin-left: -4px;
}
.matrix {
  display: grid;
  grid-template-columns: 69px 88px 100px 100px 100px 100px 85px 60px;
  grid-template-rows: 26px 23px 23px;
  row-gap: 7px;
  margin-top: -8px;
  font-size: 13px;
  line-height: 15px;
}
.colhead {
  align-self: end;
  width: 60px;
  margin: 0 0 -7px -1px;
  text-align: center;
}
.colhead:nth-child(8) {
  width: 64px;
  margin: 0 0 -8px -6px;
}
.rowhead {
  line-height: 19px;
}
.rowhead.set {
  padding-left: 10px;
}
.matrix input {
  width: 59px;
  height: 23px;
  padding: 0 3px 0 2px;
  border: 1px solid #aaa;
  border-radius: 3px;
  background: #fff;
  font-weight: bold;
}
.matrix input:disabled {
  color: #777;
}
.matrix .numeric {
  text-align: right;
  padding-right: 4px;
}
.channel {
  display: flex;
  align-items: center;
  gap: 18px;
  height: 23px;
  padding: 11px 0 0 1px;
}
.channel b {
  font-size: 16px;
}
.channel strong {
  font-size: 13px;
}
.bottom {
  display: flex;
  align-items: flex-start;
  margin-left: -2px;
}
.flags {
  display: flex;
  width: 532px;
  height: 176px;
  margin-top: 4px;
}
.leds,
.names {
  margin-top: 8px;
}
.leds li,
.names li {
  display: flex;
  align-items: center;
  height: 30px;
}
.names.tall li {
  height: 31px;
}
.leds {
  flex: none;
  width: 11px;
}
.leds:first-of-type {
  margin-left: 38px;
}
.leds li::before {
  content: '';
  flex: none;
  width: 11px;
  height: 11px;
  border: 1px solid #000;
  border-radius: 50%;
  background: #3dff00;
}
.names {
  margin-left: 20px;
  font: bold 16px/20px 'DejaVu Sans', sans-serif;
  white-space: nowrap;
}
.names.first {
  flex: none;
  width: 205px;
  margin-left: 32px;
}
.names.tall {
  margin-left: 15px;
}
.onoff {
  width: 51px;
  height: 31px;
  margin: 10px 18px 0;
  border: 1px solid #aaa;
  border-radius: 3px;
  background: linear-gradient(#fff, #ebebea);
  font: italic 12px 'DejaVu Sans', sans-serif;
}
.actual {
  width: 157px;
  height: 176px;
  margin-top: 1px;
  padding: 17px 0 0 19px;
  font: 21px/26px 'DejaVu Sans', sans-serif;
}
.actual legend {
  margin-left: -11px;
}
.actual label {
  display: block;
  padding-left: 2px;
}
.actual input {
  display: block;
  width: 90px;
  height: 21px;
  margin: 8px 0 4px;
  padding: 0 2px;
  border: 1px solid #aaa;
  border-radius: 3px;
  background: #fff;
  font-size: 11px;
}
.withunit {
  display: flex;
  align-items: center;
  gap: 2px;
  padding-left: 2px;
}
.withunit em {
  font-size: 13px;
  line-height: 20px;
}

.scroll {
  display: flex;
  background: #e4e3e0;
}
.scroll button {
  display: grid;
  place-items: center;
  flex: none;
  width: 13px;
  height: 13px;
  background: #fafaf9;
}
.scroll .thumb {
  flex: 1;
}
.vertical {
  flex-direction: column;
  border-left: 1px solid #c2c0be;
}
.vertical .thumb {
  border: solid #c2c0be;
  border-width: 1px 0;
  background: linear-gradient(to right, #fff, #eeecea);
}
.vertical .track {
  height: 20px;
  border-bottom: 1px solid #c2c0be;
}
.horizontal {
  border-top: 1px solid #c2c0be;
}
.horizontal .thumb {
  border: solid #c2c0be;
  border-width: 0 1px;
  background: linear-gradient(#fff, #eeecea);
}
.horizontal .track {
  width: 55px;
  border-right: 1px solid #c2c0be;
}
.corner {
  border: solid #c2c0be;
  border-width: 1px 0 0 1px;
  background: #fff;
}
</style>
